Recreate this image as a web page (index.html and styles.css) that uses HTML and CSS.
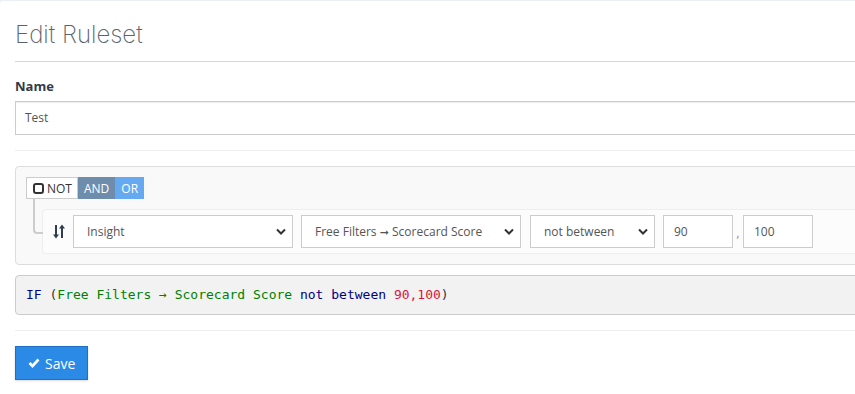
FILE: index.html
```html
<!DOCTYPE html>
<html lang="en">
<head>
    <meta charset="UTF-8">
    <meta name="viewport" content="width=device-width, initial-scale=1.0">
    <title>Edit Ruleset</title>
    <link rel="stylesheet" href="styles.css">
</head>
<body>
    <div class="box">
        <div class="box-header">
            <h3 class="box-title">Edit Ruleset</h3>
        </div>
        <div class="box-body">
            <div class="form-group">
                <label for="name">Name</label>
                <div class="form-control" id="name">Test</div>
            </div>
            <hr class="divider">

            <div class="rules-group">
                <div class="btn-group">
                    <span class="btn btn-not">
                        <svg class="square" width="11" height="11" viewBox="0 0 11 11"><rect x="1" y="1" width="9" height="9" rx="2" fill="none" stroke="#333" stroke-width="2"/></svg>
                        NOT
                    </span>
                    <span class="btn btn-and">AND</span>
                    <span class="btn btn-or">OR</span>
                </div>
                <div class="rules-list">
                    <div class="rule">
                        <svg class="sort" width="12" height="15" viewBox="0 0 12 15">
                            <path d="M3 1v11" stroke="#2c3e50" stroke-width="2"/>
                            <path d="M0 10.5l3 4 3-4z" fill="#2c3e50"/>
                            <path d="M9 3v11" stroke="#2c3e50" stroke-width="2"/>
                            <path d="M6 4.5l3-4 3 4z" fill="#2c3e50"/>
                        </svg>
                        <div class="select w-220">
                            <span>Insight</span>
                            <svg width="10" height="7" viewBox="0 0 10 7"><path d="M1 1.5l4 4 4-4" fill="none" stroke="#333" stroke-width="2"/></svg>
                        </div>
                        <div class="select w-220">
                            <span>Free Filters <span class="arrow">➞</span> Scorecard Score</span>
                            <svg width="10" height="7" viewBox="0 0 10 7"><path d="M1 1.5l4 4 4-4" fill="none" stroke="#333" stroke-width="2"/></svg>
                        </div>
                        <div class="select w-125">
                            <span>not between</span>
                            <svg width="10" height="7" viewBox="0 0 10 7"><path d="M1 1.5l4 4 4-4" fill="none" stroke="#333" stroke-width="2"/></svg>
                        </div>
                        <div class="value-input">90</div>
                        <span class="sep">,</span>
                        <div class="value-input">100</div>
                    </div>
                </div>
            </div>

            <pre class="sql-preview"><span class="kw">IF</span> (<span class="field">Free Filters → Scorecard Score</span> <span class="kw">not between</span> <span class="num">90,100</span>)</pre>
            <hr class="divider">

            <button class="btn-save">
                <svg width="12" height="10" viewBox="0 0 12 10"><path d="M1.5 5l3 3 6-6.5" fill="none" stroke="#fff" stroke-width="2.6"/></svg>
                Save
            </button>
        </div>
    </div>
</body>
</html>
```

FILE: styles.css
```css
body {
    margin: 0;
    background-color: #ecf0f5;
    font-family: "Open Sans", Arial, sans-serif;
    font-size: 13px;
    color: #333;
    overflow: hidden;
}
.box {
    background: #fff;
    margin-top: 1px;
    margin-right: -40px;
    border-radius: 3px;
    height: 400px;
}
.box-header {
    margin: 0 15px;
    padding: 20px 0 13px;
    border-bottom: 1px solid #d6d6d6;
}
.box-title {
    margin: 0;
    font-family: Inter, Lato, sans-serif;
    font-weight: 200;
    font-size: 24px;
    line-height: 27px;
    color: #5c6370;
}
.box-body {
    padding: 15px 15px 0;
}
.form-group label {
    display: block;
    font-weight: 700;
    color: #333b48;
    line-height: 18px;
    margin-bottom: 6px;
}
.form-control {
    height: 32px;
    line-height: 32px;
    padding: 0 9px;
    border: 1px solid #ccc;
    color: #555;
    font-size: 12px;
    box-shadow: inset 0 1px 1px rgba(0, 0, 0, 0.075);
}
.divider {
    border: 0;
    border-top: 1px solid #eee;
    margin: 15px 0;
}
.rules-group {
    background: #f9f9f9;
    border: 1px solid #ddd;
    border-radius: 4px;
    padding: 10px;
}
.btn-group {
    display: flex;
    height: 22px;
}
.btn {
    display: flex;
    align-items: center;
    padding: 0 5px;
    font-size: 12px;
    color: #fff;
}
.btn-not {
    background: #fff;
    color: #333;
    border: 1px solid #ccc;
    padding: 0 5px 0 6px;
    gap: 3px;
}
.btn-and {
    background: #6e8cab;
    padding: 0 6px;
}
.btn-or {
    background: #65aaf0;
    padding: 0 6px;
}
.rules-list {
    padding: 10px 0 0 16px;
}
.rule {
    position: relative;
    display: flex;
    align-items: center;
    background: #fcfcfc;
    border: 1px solid #eee;
    border-radius: 4px;
    padding: 5px 10px;
}
.rule::before {
    content: "";
    position: absolute;
    left: -10px;
    top: -11px;
    width: 8px;
    height: 33px;
    border-left: 2px solid #ccc;
    border-bottom: 2px solid #ccc;
    border-radius: 0 0 0 4px;
}
.sort {
    margin-right: 8px;
}
.select {
    display: flex;
    align-items: center;
    justify-content: space-between;
    box-sizing: border-box;
    height: 33px;
    padding: 0 6px 0 13px;
    border: 1px solid #ccc;
    background: #fff;
    color: #555;
    font-size: 12px;
    margin-right: 8px;
}
.arrow {
    font-family: "DejaVu Sans", sans-serif;
    font-size: 11px;
}
.w-220 {
    width: 220px;
}
.w-125 {
    width: 125px;
    margin-left: 1px;
}
.value-input {
    box-sizing: border-box;
    width: 70px;
    height: 33px;
    line-height: 31px;
    padding: 0 10px;
    border: 1px solid #ccc;
    background: #fff;
    color: #555;
    font-size: 12px;
}
.sep {
    width: 10px;
    text-align: center;
    color: #999;
}
.sql-preview {
    margin: 10px 0 0;
    padding: 9px 10px 9px;
    line-height: 20px;
    background: #f2f2f2;
    border: 1px solid #ccc;
    border-radius: 4px;
    font-family: "DejaVu Sans Mono", monospace;
    font-size: 13px;
    color: #333;
}
.kw {
    color: #000080;
}
.field {
    color: #008000;
}
.num {
    color: #dc143c;
}
.btn-save {
    display: flex;
    align-items: center;
    gap: 5px;
    height: 34px;
    padding: 0 12px;
    background-color: #2a8ae6;
    border: 1px solid #1f70c4;
    color: #fff;
    font-family: "Open Sans", Arial, sans-serif;
    font-size: 14px;
    box-shadow: 0 1px 2px rgba(0, 0, 0, 0.15);
}
```
